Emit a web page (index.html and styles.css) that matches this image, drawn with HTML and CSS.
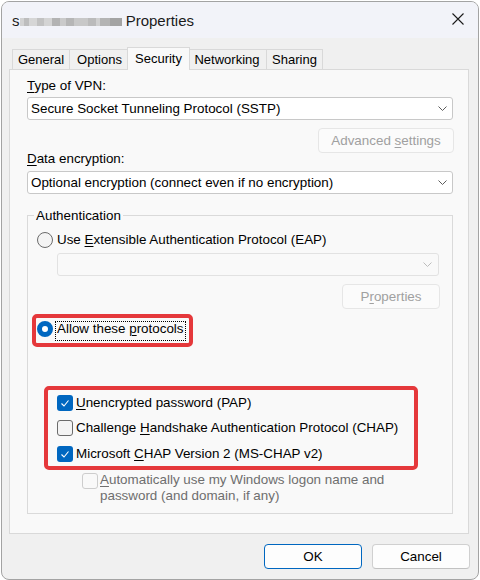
FILE: index.html
```html
<!DOCTYPE html>
<html>
<head>
<meta charset="utf-8">
<title>Properties</title>
<link rel="stylesheet" href="styles.css">
</head>
<body>
<div class="window">
  <div class="titlebar">
    <span class="title">s<span class="redact"></span> Properties</span>
    <svg class="close" width="12" height="12" viewBox="0 0 12 12"><path d="M0.5 0.5L11.5 11.5M11.5 0.5L0.5 11.5" stroke="#1b1b1b" stroke-width="1.1" fill="none"/></svg>
  </div>
  <div class="sheet">
    <div class="tabs">
      <div class="tab tab-general">General</div>
      <div class="tab tab-options">Options</div>
      <div class="tab tab-security active">Security</div>
      <div class="tab tab-networking">Networking</div>
      <div class="tab tab-sharing">Sharing</div>
    </div>
    <div class="panel">
      <div class="label"><u>T</u>ype of VPN:</div>
      <div class="select">
        <span>Secure Socket Tunneling Protocol (SSTP)</span>
        <svg class="chev" width="9" height="5" viewBox="0 0 9 5"><path d="M0.5 0.5L4.5 4.5L8.5 0.5" stroke="#5c5c5c" stroke-width="1" fill="none"/></svg>
      </div>
      <div class="btn btn-disabled btn-adv">Advanced&nbsp;<u>s</u>ettings</div>
      <div class="label label-data"><u>D</u>ata encryption:</div>
      <div class="select select-data">
        <span>Optional encryption (connect even if no encryption)</span>
        <svg class="chev" width="9" height="5" viewBox="0 0 9 5"><path d="M0.5 0.5L4.5 4.5L8.5 0.5" stroke="#5c5c5c" stroke-width="1" fill="none"/></svg>
      </div>
      <fieldset class="group">
        <legend>Authentication</legend>
        <div class="option">
          <span class="radio"></span>
          <span>Use <u>E</u>xtensible Authentication Protocol (EAP)</span>
        </div>
        <div class="select select-disabled">
          <span></span>
          <svg class="chev" width="9" height="5" viewBox="0 0 9 5"><path d="M0.5 0.5L4.5 4.5L8.5 0.5" stroke="#bcbcbc" stroke-width="1" fill="none"/></svg>
        </div>
        <div class="btn btn-disabled btn-props">P<u>r</u>operties</div>
        <div class="highlight hl-allow">
          <span class="radio radio-on"></span>
          <span class="focus">Allow these <u>p</u>rotocols</span>
        </div>
        <div class="highlight hl-protocols">
          <div class="option">
            <span class="check on"><svg width="16" height="16" viewBox="0 0 16 16"><path d="M4.5 8.5L7 11L11.5 5.5" stroke="#fff" stroke-width="1.1" fill="none"/></svg></span>
            <span><u>U</u>nencrypted password (PAP)</span>
          </div>
          <div class="option opt-2">
            <span class="check"></span>
            <span>Challenge <u>H</u>andshake Authentication Protocol (CHAP)</span>
          </div>
          <div class="option opt-3">
            <span class="check on"><svg width="16" height="16" viewBox="0 0 16 16"><path d="M4.5 8.5L7 11L11.5 5.5" stroke="#fff" stroke-width="1.1" fill="none"/></svg></span>
            <span>Microsoft <u>C</u>HAP Version 2 (MS-CHAP v2)</span>
          </div>
        </div>
        <div class="option option-auto">
          <span class="check check-disabled"></span>
          <span class="muted"><u>A</u>utomatically use my Windows logon name and<br>password (and domain, if any)</span>
        </div>
      </fieldset>
    </div>
    <div class="actions">
      <div class="btn btn-ok">OK</div>
      <div class="btn btn-cancel">Cancel</div>
    </div>
  </div>
</div>
</body>
</html>
```

FILE: styles.css
```css
* { box-sizing: border-box; }
html, body { margin: 0; padding: 0; background: #ffffff; }
body {
  font-family: "Liberation Sans", Arial, sans-serif;
  font-size: 13.4px;
  color: #000;
}
u { text-decoration-thickness: 1px; text-underline-offset: 2px; }

.window {
  margin: 1px 0 0 1px;
  width: 478px;
  height: 579px;
  border: 1px solid #a3a3a3;
  border-radius: 8px;
  background: #f0f0f0;
  overflow: hidden;
}

.titlebar {
  height: 36px;
  background: #f2f3f9;
  display: flex;
  align-items: center;
  padding-left: 10px;
}
.title { font-size: 15px; color: #1b1b1b; }
.redact {
  display: inline-block;
  width: 102px;
  height: 8px;
  background: linear-gradient(to right,
    #d2d2d2 0 4px, #bdbdbd 4px 9px, #d6d6d6 9px 17px, #c2c2c2 17px 24px,
    #d4d4d4 24px 32px, #b3b3b3 32px 40px, #cacaca 40px 46px, #b6b6b6 46px 54px,
    #c8c8c8 54px 68px, #bbbbbb 68px 76px, #d0d0d0 76px 80px, #b4b4b4 80px 90px,
    #a3a3a3 90px 102px);
}
.close { margin-left: auto; margin-right: 14px; align-self: flex-start; margin-top: 11px; }

.sheet { margin-left: 7px; width: 460px; }

.tabs {
  display: flex;
  align-items: flex-end;
  height: 22px;
  margin-top: 9px;
  padding-left: 3px;
}
.tab {
  height: 20px;
  line-height: 19px;
  border: 1px solid #d9d9d9;
  border-bottom: none;
  background: #f0f0f0;
  text-align: center;
  margin-left: -1px;
  font-size: 13px;
}
.tab-general { width: 58px; margin-left: 0; }
.tab-options { width: 61px; }
.tab-security { width: 59px; }
.tab-networking { width: 80px; }
.tab-sharing { width: 57px; }
.tab.active {
  width: 63px;
  height: 23px;
  line-height: 21px;
  margin-left: -3px;
  margin-right: -2px;
  margin-bottom: -1px;
  background: #f9f9f9;
  position: relative;
  z-index: 1;
}

.panel {
  height: 465px;
  border: 1px solid #d9d9d9;
  background: #f9f9f9;
  padding: 8px 15px 0 17px;
  display: flex;
  flex-direction: column;
}

.label { height: 15px; line-height: 15px; }
.label-data { margin-top: -2px; }

.select {
  margin-top: 4px;
  height: 23px;
  border: 1px solid #c8c8c8;
  border-radius: 3px;
  background: #ffffff;
  display: flex;
  align-items: center;
  justify-content: space-between;
  padding: 0 5px 0 3px;
  line-height: 21px;
  white-space: nowrap;
}
.select-data { margin-top: 5px; }
.select-disabled {
  margin: 5px 1px 0 20px;
  border-color: #e2e2e2;
  background: #f9f9f9;
  padding-right: 6px;
}
.chev { flex: none; }

.btn {
  display: flex;
  align-items: center;
  justify-content: center;
  height: 25px;
  border: 1px solid #d0d0d0;
  border-bottom-color: #c2c2c2;
  border-radius: 4px;
  background: #fdfdfd;
  white-space: nowrap;
}
.btn-disabled {
  border-color: #e6e6e6;
  background: #fbfbfb;
  color: #a0a0a0;
}
.btn-adv { align-self: flex-end; width: 136px; margin-top: 8px; margin-right: -1px; }
.btn-props { width: 98px; margin: 8px 0 0 auto; }

.group {
  margin: 14px 0 0;
  padding: 9px 12px 9px 9px;
  border: 1px solid #dadada;
  min-width: 0;
}
.group legend {
  padding: 0 2px;
  margin-left: -3px;
  line-height: 15px;
}

.option {
  display: flex;
  align-items: center;
  height: 16px;
  line-height: 16px;
  white-space: nowrap;
}
.radio {
  flex: none;
  width: 16px;
  height: 16px;
  border-radius: 50%;
  border: 1px solid #6b6b6b;
  background: #f4f4f4;
  margin-right: 4px;
}
.radio-on {
  border: 5px solid #0067c0;
  background: #ffffff;
  margin-right: 2px;
}

.highlight {
  border: 4px solid #e5383b;
  border-radius: 5px;
}
.hl-allow {
  display: flex;
  align-items: flex-start;
  width: fit-content;
  margin: 5px 0 0 -5px;
  padding: 3px 3px 2px 1px;
}
.focus {
  border: 1px dotted #000;
  padding: 0 1px 4px;
  line-height: 14px;
  white-space: nowrap;
}

.hl-protocols {
  width: 374px;
  margin: 39px 0 0 7px;
  padding: 5px 0 4px 9px;
}
.opt-2 { margin-top: 9px; }
.opt-3 { margin-top: 10px; }

.check {
  flex: none;
  width: 16px;
  height: 16px;
  border-radius: 3px;
  border: 1px solid #6b6b6b;
  background: #f4f4f4;
  margin-right: 3px;
}
.check.on {
  border: none;
  background: #0067c0;
}
.check svg { display: block; }
.check-disabled {
  border-color: #cdcdcd;
  background: #f9f9f9;
  margin-top: 1px;
  margin-right: 2px;
}

.option-auto {
  height: auto;
  align-items: flex-start;
  margin: 2px 0 0 45px;
}
.muted { color: #6e6e6e; }

.actions {
  display: flex;
  justify-content: flex-end;
  gap: 10px;
  margin-top: 10px;
  margin-right: -1px;
}
.btn-ok, .btn-cancel { width: 98px; }
.btn-ok { border: 1px solid #0067c0; }
```
